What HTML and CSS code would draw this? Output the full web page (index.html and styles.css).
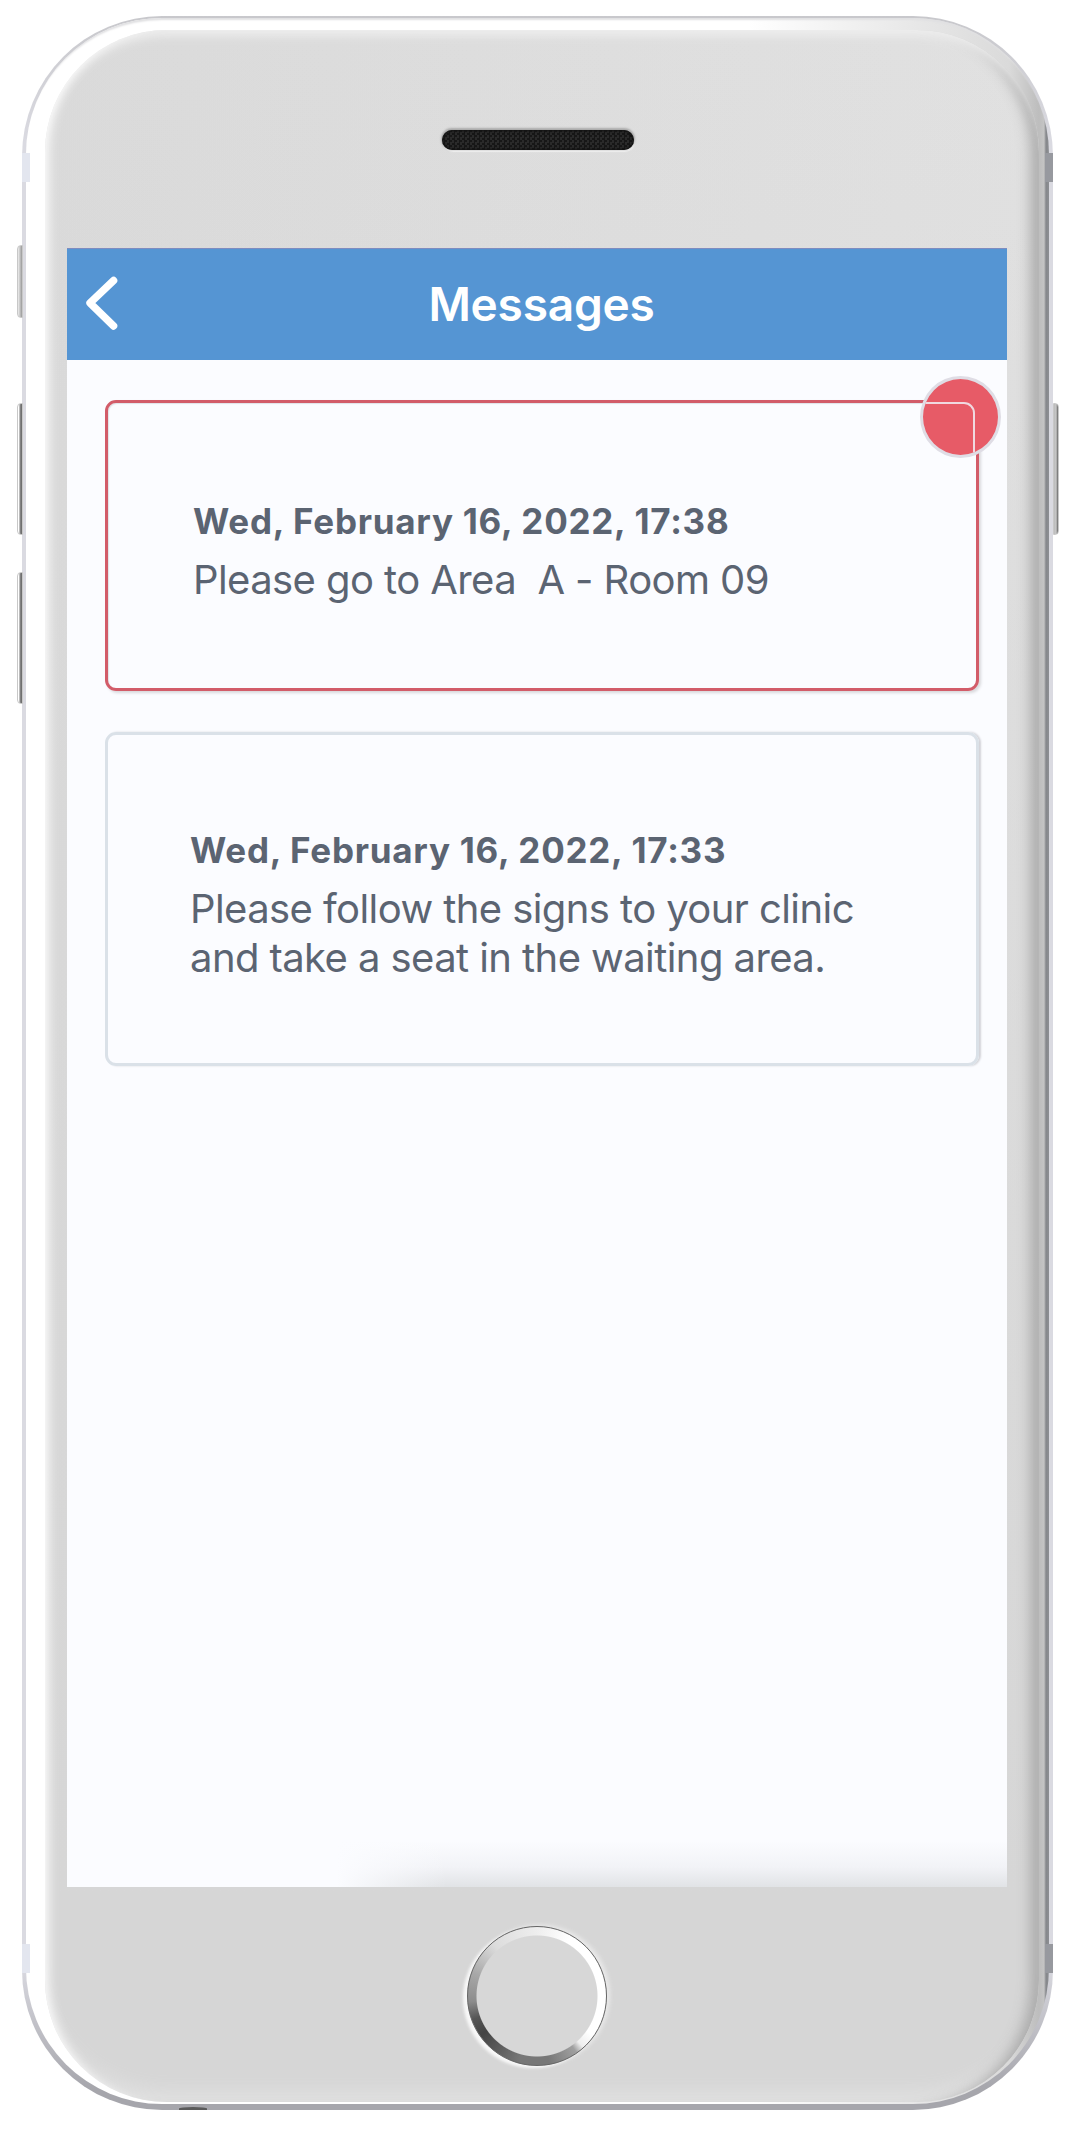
FILE: index.html
```html
<!DOCTYPE html>
<html lang="en">
  <head>
    <meta charset="UTF-8" />
    <meta name="viewport" content="width=device-width, initial-scale=1.0" />
    <title>Messages</title>

    <link rel="stylesheet" href="styles.css">
  </head>
  <body>
    <div class="phone">
      <span class="key mute"></span>
      <span class="key vol-up"></span>
      <span class="key vol-down"></span>
      <span class="key power"></span>
      <span class="band top-left"></span>
      <span class="band top-right"></span>
      <span class="band bottom-left"></span>
      <span class="band bottom-right"></span>
      <span class="jack"></span>

      <div class="rim">
        <div class="face">
          <div class="top">
            <div class="speaker"></div>
          </div>

          <div class="screen">
            <header class="header">
              <svg class="back" width="40" height="60" viewBox="0 0 40 60">
                <path d="M33.6 7.5 L10 30 L33.6 53" fill="none" stroke="#fff" stroke-width="7.4" stroke-linecap="round" stroke-linejoin="round" />
              </svg>
              <h1 class="title">Messages</h1>
            </header>

            <main class="messages">
              <article class="message unread">
                <span class="badge"></span>
                <h2 class="date">Wed, February 16, 2022, 17:38</h2>
                <p class="text">Please go to Area&nbsp; A - Room 09</p>
              </article>

              <article class="message">
                <h2 class="date">Wed, February 16, 2022, 17:33</h2>
                <p class="text">Please follow the signs to your clinic<br>and take a seat in the waiting area.</p>
              </article>
            </main>
          </div>

          <div class="bottom">
            <div class="home"></div>
          </div>
        </div>
      </div>
    </div>
  </body>
</html>
```
FILE: styles.css
```css
* {
  box-sizing: border-box;
}

body {
  margin: 0;
  background: #fff;
  font-family: Inter, "Liberation Sans", sans-serif;
  color: #5b6472;
}

h1,
h2,
p {
  margin: 0;
}

/* phone */
.phone {
  position: relative;
  width: 1031px;
  height: 2094px;
  margin: 16px 0 0 22px;
  padding: 2px 4px 6px 4px;
  border-radius: 140px;
  background: linear-gradient(to bottom, #c8c8cc 0%, #dadae1 6%, #dadae1 93%, #a6a6ac 99%);
}

.rim {
  height: 100%;
  padding: 12px 10px 2px 19px;
  border-radius: 136px;
  background: linear-gradient(to right, #fff 0, #fff calc(100% - 300px), #dadada calc(100% - 40px), #bdbdbd calc(100% - 10px), #c4c4c4 calc(100% - 5px), #85878b calc(100% - 3px), #8d8f93 100%);
  box-shadow: inset 0 5px 2px -3px #e0e0e2;
}

.face {
  display: flex;
  flex-direction: column;
  height: 100%;
  border-radius: 122px;
  background: linear-gradient(to bottom, transparent 0%, #d6d6d6 90%), linear-gradient(to right, #dadada, #e1e1e1);
  box-shadow: inset 14px 0 12px -11px #fff, inset 0 12px 10px -6px #eee,
    inset -18px 0 14px -10px #a9a9a9, inset 0 -20px 20px -12px #e3e3e3;
}

.top {
  display: flex;
  justify-content: center;
  height: 218px;
  padding-top: 100px;
}

.speaker {
  width: 192px;
  height: 20px;
  margin-right: 9px;
  border-radius: 10px;
  background: repeating-conic-gradient(#171717 0% 25%, #2a2a2a 0% 50%) 0 0 / 5px 5px;
  box-shadow: inset 0 0 3px 1px #111, 0 -1px 2px 1px #aaa, 1px 2px 1px #f2f2f2;
}

.bottom {
  display: flex;
  justify-content: center;
  padding-top: 39px;
}

.home {
  width: 140px;
  height: 140px;
  margin-right: 10px;
  border: 1.5px solid #666;
  border-radius: 50%;
  background: radial-gradient(circle, #d7d7d7 60px, transparent 61px),
    conic-gradient(#eee 0deg, #fff 30deg, #fff 125deg, #eee 138deg, #a0a0a0 145deg, #777 170deg, #777 195deg, #444 235deg, #555 250deg, #8c8c8c 265deg, #a8a8a8 290deg, #dcdcdc 320deg, #eee 360deg);
  box-shadow: -4px 2px 3px #f8f8f8, 3px -1px 4px #eaeaea;
}

/* side keys and antenna bands */
.key {
  position: absolute;
  left: -5px;
  width: 6px;
  height: 132px;
  border: 1px solid #c8c8c8;
  border-radius: 4px 0 0 4px;
  background: linear-gradient(to right, #fff 0, #fff 15%, #888 55%, #666);
}

.mute {
  top: 229px;
  height: 73px;
  background: linear-gradient(to right, #eee, #999);
}

.vol-up {
  top: 387px;
}

.vol-down {
  top: 556px;
}

.power {
  top: 387px;
  left: auto;
  right: -6px;
  border-radius: 0 4px 4px 0;
  background: linear-gradient(to right, #bbb, #c8c8c8 50%, #666);
}

.band {
  position: absolute;
  left: 0;
  width: 8px;
  height: 29px;
  background: #e3e6ef;
}

.top-left,
.top-right {
  top: 137px;
}

.bottom-left,
.bottom-right {
  top: 1928px;
}

.top-right,
.bottom-right {
  left: auto;
  right: 0;
  background: #97999f;
}

.jack {
  position: absolute;
  left: 157px;
  bottom: 0;
  width: 28px;
  height: 3px;
  border-radius: 50% 50% 0 0;
  background: #5a5a5a;
}

/* app */
.screen {
  width: 940px;
  height: 1639px;
  margin-left: 22px;
  background: linear-gradient(to right, #fbfcff 270px, transparent 380px),
    linear-gradient(to top, #e1e3e6, #f2f3f7 20px, #fbfcff 46px);
}

.header {
  display: flex;
  align-items: center;
  height: 112px;
  padding: 0 13px;
  border-top: 1px solid #7e8cc0;
  background: #5595d3;
}

.back {
  margin-bottom: 4px;
}

.title {
  flex: 1;
  margin: 0 31px 2px 0;
  font-size: 46px;
  font-weight: 600;
  line-height: 56px;
  letter-spacing: -0.2px;
  text-align: center;
  color: #fff;
}

.messages {
  display: flex;
  flex-direction: column;
  gap: 41px;
  padding: 40px 28px 0 38px;
}

.message {
  position: relative;
  height: 334px;
  padding: 94px 80px 0 82px;
  border: 3px solid #dae1e8;
  border-radius: 11px;
  box-shadow: 2px 0 2px #d3d3d8;
}

.unread {
  height: 291px;
  padding: 97px 80px 0 85px;
  border-color: #d25c69;
  box-shadow: 2px 2px 3px #d8d8dc, inset 1px 1px 1px #dfe3e8;
}

/* the card's corner stays visible on top of the dot */
.badge {
  position: absolute;
  top: -27px;
  right: -25px;
  width: 81px;
  height: 82px;
  overflow: hidden;
  border: 3px solid #dfdde5;
  border-radius: 50%;
  background: #e75b67;
}

.badge::after {
  content: "";
  position: absolute;
  left: -20px;
  top: 23px;
  width: 68px;
  height: 80px;
  border: 2px solid #f0d9e0;
  border-radius: 11px;
}

.date {
  font-size: 35px;
  font-weight: 700;
  line-height: 42px;
  letter-spacing: 0.74px;
  white-space: nowrap;
}

.text {
  margin-top: 14px;
  font-size: 40px;
  line-height: 48.6px;
  letter-spacing: -0.58px;
  white-space: nowrap;
}
```
